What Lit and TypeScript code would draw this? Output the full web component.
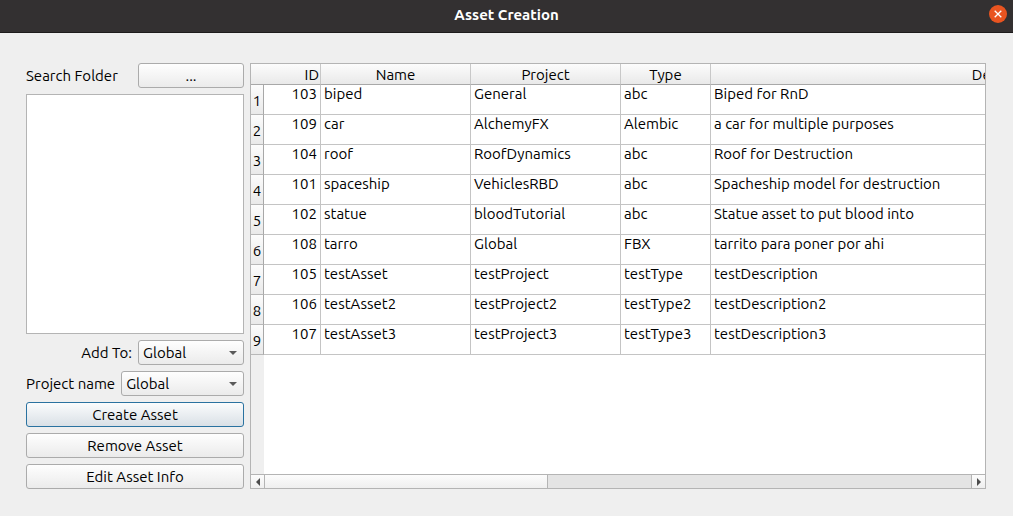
import { LitElement, html, css } from "lit";
import { customElement, property } from "lit/decorators.js";

interface Asset {
  id: number;
  name: string;
  project: string;
  type: string;
  description: string;
}

const ASSETS: Asset[] = [
  { id: 103, name: "biped", project: "General", type: "abc", description: "Biped for RnD" },
  { id: 109, name: "car", project: "AlchemyFX", type: "Alembic", description: "a car for multiple purposes" },
  { id: 104, name: "roof", project: "RoofDynamics", type: "abc", description: "Roof for Destruction" },
  { id: 101, name: "spaceship", project: "VehiclesRBD", type: "abc", description: "Spacheship model for destruction" },
  { id: 102, name: "statue", project: "bloodTutorial", type: "abc", description: "Statue asset to put blood into" },
  { id: 108, name: "tarro", project: "Global", type: "FBX", description: "tarrito para poner por ahi" },
  { id: 105, name: "testAsset", project: "testProject", type: "testType", description: "testDescription" },
  { id: 106, name: "testAsset2", project: "testProject2", type: "testType2", description: "testDescription2" },
  { id: 107, name: "testAsset3", project: "testProject3", type: "testType3", description: "testDescription3" },
];

@customElement("asset-table")
export class AssetTable extends LitElement {
  @property({ attribute: false }) assets: Asset[] = [];

  static styles = css`
    :host {
      display: flex;
      flex-direction: column;
      min-width: 0;
      border: 1px solid #b4b4b4;
      background: #fff;
      box-sizing: border-box;
    }
    .viewport {
      flex: 1;
      min-height: 0;
      overflow: hidden;
      background: linear-gradient(#efefef, #efefef) left / 13px 100% no-repeat;
    }
    table {
      table-layout: fixed;
      width: 1060px;
      border-collapse: separate;
      border-spacing: 0;
      background: #fff;
    }
    .c-num { width: 13px; }
    .c-id { width: 57px; }
    .c-name, .c-project { width: 150px; }
    .c-type { width: 90px; }
    th, td {
      box-sizing: border-box;
      padding: 0;
      font-weight: 400;
      white-space: nowrap;
      line-height: 18px;
    }
    thead th {
      height: 21px;
      padding-top: 2px;
      border-right: 1px solid #c8c8c8;
      border-bottom: 1px solid #a8a8a8;
      background: linear-gradient(#fcfcfc, #e9e9e9);
      text-align: center;
    }
    thead .corner { border-right: 0; }
    thead .id { text-align: right; padding-right: 1px; }
    tbody th {
      height: 30px;
      padding-top: 3px;
      border-right: 1px solid #a8a8a8;
      border-bottom: 1px solid #b8b8b8;
      background: linear-gradient(#fcfcfc, #e9e9e9);
      text-align: center;
    }
    td {
      height: 30px;
      padding: 0 3px;
      border-right: 1px solid #c4c4c4;
      border-bottom: 1px solid #c4c4c4;
      vertical-align: top;
    }
    td.id { text-align: right; }
    .scroll {
      display: flex;
      height: 13px;
      border-top: 1px solid #b4b4b4;
      background: #e4e4e4;
    }
    .step {
      display: flex;
      align-items: center;
      justify-content: center;
      box-sizing: border-box;
      width: 14px;
      padding: 0;
      border: 0;
      background: linear-gradient(#fcfcfc, #efefef);
    }
    .step.left { border-right: 1px solid #b4b4b4; }
    .step.right { border-left: 1px solid #b4b4b4; }
    .step svg { display: block; fill: #4c4c4c; }
    .groove { flex: 1; display: flex; }
    .thumb {
      width: 40%;
      border-right: 1px solid #b4b4b4;
      background: linear-gradient(#fcfcfc, #efefef);
    }
  `;

  render() {
    return html`
      <div class="viewport">
        <table aria-label="Assets">
          <colgroup>
            <col class="c-num" /><col class="c-id" /><col class="c-name" />
            <col class="c-project" /><col class="c-type" /><col />
          </colgroup>
          <thead>
            <tr>
              <th class="corner"></th>
              <th class="id" scope="col">ID</th>
              <th scope="col">Name</th>
              <th scope="col">Project</th>
              <th scope="col">Type</th>
              <th scope="col">Description</th>
            </tr>
          </thead>
          <tbody>
            ${this.assets.map(
              (a, i) => html`<tr>
                <th scope="row">${i + 1}</th>
                <td class="id">${a.id}</td>
                <td>${a.name}</td>
                <td>${a.project}</td>
                <td>${a.type}</td>
                <td>${a.description}</td>
              </tr>`
            )}
          </tbody>
        </table>
      </div>
      <div class="scroll">
        <button class="step left" aria-label="Scroll left">
          <svg width="4" height="8" viewBox="0 0 4 8"><path d="M4 0v8L0 4z" /></svg>
        </button>
        <div class="groove"><div class="thumb"></div></div>
        <button class="step right" aria-label="Scroll right">
          <svg width="4" height="8" viewBox="0 0 4 8"><path d="M0 0v8L4 4z" /></svg>
        </button>
      </div>
    `;
  }
}

@customElement("app-root")
export class AppRoot extends LitElement {
  static styles = css`
    :host {
      display: flex;
      flex-direction: column;
      min-height: 100vh;
      box-sizing: border-box;
      background: #efefef;
      color: #000;
      font: 15px/20px "Ubuntu", "Noto Sans", "Open Sans", sans-serif;
    }
    .titlebar {
      display: grid;
      grid-template-columns: 1fr auto 1fr;
      align-items: center;
      height: 33px;
      padding: 0 6px;
      box-sizing: border-box;
      border-bottom: 1px solid #1d1b1c;
      background: #333031;
      color: #fff;
    }
    h1 {
      grid-column: 2;
      margin: 0;
      padding-bottom: 3px;
      font-size: 15px;
      line-height: 20px;
      font-weight: 700;
    }
    .close {
      justify-self: end;
      align-self: start;
      margin-top: 5px;
      width: 18px;
      height: 18px;
      padding: 0;
      border: 0;
      background: none;
    }
    .close svg { display: block; }
    main {
      flex: 1;
      display: grid;
      grid-template-columns: 218px minmax(0, 1fr);
      gap: 6px;
      padding: 30px 27px 27px 26px;
    }
    .panel {
      display: flex;
      flex-direction: column;
      gap: 6px;
    }
    .row {
      display: flex;
      align-items: center;
      justify-content: space-between;
      gap: 6px;
    }
    .row.end { justify-content: flex-end; }
    .btn, .combo select {
      box-sizing: border-box;
      height: 25px;
      border: 1px solid #ababab;
      border-radius: 3px;
      background: linear-gradient(#fefefe, #ebebeb);
      color: inherit;
      font: inherit;
    }
    .btn { padding: 0 6px; line-height: 20px; }
    .btn.browse { width: 106px; }
    .btn.primary {
      border-color: #2a72a0;
      background: linear-gradient(#fbfcfd, #d9e0e6);
    }
    .files {
      flex: 1;
      min-height: 120px;
      margin: 0;
      padding: 0;
      appearance: none;
      border: 1px solid #b4b4b4;
      border-radius: 0;
      background: #fff;
      font: inherit;
    }
    .combo {
      display: grid;
      align-items: center;
      width: 106px;
    }
    .combo.wide { flex: 1; }
    .combo select {
      grid-area: 1 / 1;
      width: 100%;
      padding: 0 20px 0 4px;
      appearance: none;
    }
    .combo svg {
      grid-area: 1 / 1;
      justify-self: end;
      margin-right: 7px;
      pointer-events: none;
      fill: #5a5a5a;
    }
  `;

  private combo(id: string, wide = false) {
    return html`<div class="combo ${wide ? "wide" : ""}">
      <select id=${id}><option>Global</option></select>
      <svg width="8" height="4" viewBox="0 0 8 4"><path d="M0 0h8L4 4z" /></svg>
    </div>`;
  }

  render() {
    return html`
      <header class="titlebar">
        <h1>Asset Creation</h1>
        <button class="close" aria-label="Close">
          <svg width="18" height="18" viewBox="0 0 18 18">
            <circle cx="9" cy="9" r="9" fill="#e95420" />
            <path d="M5.7 5.7l6.6 6.6M12.3 5.7l-6.6 6.6" stroke="#fff" stroke-width="1.3" />
          </svg>
        </button>
      </header>
      <main>
        <section class="panel">
          <div class="row">
            <label for="browse">Search Folder</label>
            <button id="browse" class="btn browse">...</button>
          </div>
          <select class="files" multiple aria-label="Files"></select>
          <div class="row end">
            <label for="target">Add To:</label>
            ${this.combo("target")}
          </div>
          <div class="row">
            <label for="project">Project name</label>
            ${this.combo("project", true)}
          </div>
          <button class="btn primary">Create Asset</button>
          <button class="btn">Remove Asset</button>
          <button class="btn">Edit Asset Info</button>
        </section>
        <asset-table .assets=${ASSETS}></asset-table>
      </main>
    `;
  }
}
